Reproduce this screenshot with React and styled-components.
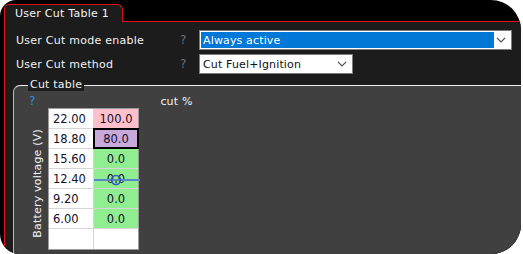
import React from "react";
import styled, { createGlobalStyle } from "styled-components";

const Global = createGlobalStyle`
  html, body { margin: 0; padding: 0; background: #ffffff; }
  body { font-family: "DejaVu Sans", Verdana, sans-serif; font-size: 11px; }
`;

const Window = styled.div`
  width: 521px;
  height: 254px;
  background: #000;
  border-radius: 16px 30px 30px 20px;
  overflow: hidden;
  display: flex;
  flex-direction: column;
  padding: 4px 0 0 4px;
  box-sizing: border-box;
`;

const TabRow = styled.div`
  display: flex;
  height: 17px;
`;

const Tab = styled.div`
  position: relative;
  z-index: 1;
  width: 119px;
  height: 18px;
  box-sizing: border-box;
  border: 1px solid #e0101a;
  border-bottom: none;
  border-radius: 5px 6px 0 0;
  background: #1c1c1c;
  color: #f4f4f4;
  padding-left: 10px;
  line-height: 17px;
  letter-spacing: 0.25px;
`;

const Body = styled.div`
  flex: 1;
  background: #1c1c1c;
  border-top: 1px solid #e0101a;
  border-left: 1px solid #e0101a;
  display: flex;
  flex-direction: column;
  min-height: 0;
`;

const Settings = styled.div`
  display: grid;
  grid-template-columns: 160px 23px auto;
  grid-auto-rows: 20px;
  row-gap: 4px;
  padding: 8px 0 0 11px;
  align-items: center;
`;

const Label = styled.div`
  color: #f2f2f2;
  letter-spacing: 0.25px;
  padding-top: 1px;
`;

const Help = styled.div`
  color: ${(p) => (p.$blue ? "#2a8de6" : "#6e6e6e")};
  padding-left: ${(p) => (p.$blue ? 0 : 4)}px;
  font-size: 12px;
`;

const Combo = styled.div`
  width: ${(p) => p.$width}px;
  height: 20px;
  box-sizing: border-box;
  border: 1px solid #7c7c7c;
  background: #fff;
  display: flex;
  align-items: center;
  padding: 1px;
`;

const ComboText = styled.div`
  flex: ${(p) => (p.$selected ? "0 0 291px" : "1")};
  align-self: stretch;
  display: flex;
  align-items: center;
  padding-left: 2px;
  background: ${(p) => (p.$selected ? "#0078d7" : "transparent")};
  color: ${(p) => (p.$selected ? "#fff" : "#111")};
  letter-spacing: 0.15px;
`;

const Chevron = styled.svg`
  margin: 0 ${(p) => p.$right}px 0 auto;
  flex: none;
`;

const Panel = styled.div`
  position: relative;
  flex: 1;
  margin: 11px 0 0 8px;
  background: #404040;
  border-top: 1px solid #f0f0f0;
  border-left: 1px solid #b8b8b8;
  border-top-left-radius: 7px;
  padding: 8px 0 0 15px;
`;

const Legend = styled.div`
  position: absolute;
  top: -7px;
  left: 14px;
  padding: 0 2px;
  background: #1c1c1c;
  color: #f2f2f2;
  line-height: 12px;
  letter-spacing: 0.2px;
`;

const PanelHead = styled.div`
  display: flex;
  height: 14px;
  line-height: 15px;
  color: #f2f2f2;
`;

const ColTitle = styled.div`
  margin-left: 125px;
  letter-spacing: 0.2px;
`;

const Chart = styled.div`
  display: flex;
  margin-left: -15px;
`;

const Axis = styled.div`
  width: 34px;
  display: flex;
  align-items: center;
  justify-content: flex-end;
  padding: 8px 4px 0 0;
  box-sizing: border-box;
`;

const AxisText = styled.div`
  writing-mode: vertical-rl;
  transform: rotate(180deg);
  color: #f2f2f2;
  letter-spacing: 0.2px;
  white-space: nowrap;
`;

const Table = styled.div`
  position: relative;
  display: grid;
  grid-template-columns: 44px 44px;
  grid-template-rows: repeat(6, 19px) 20px;
  gap: 1px;
  background: #d6d6d6;
  border: 1px solid #9c9c9c;
`;

const Cell = styled.div`
  background: ${(p) => p.$bg || "#fff"};
  color: #10102a;
  display: flex;
  align-items: center;
  justify-content: ${(p) => (p.$value ? "center" : "flex-start")};
  padding-left: ${(p) => (p.$value ? 0 : 4)}px;
  box-shadow: ${(p) => (p.$active ? "0 0 0 1px #000, inset 0 0 0 1px #000" : "none")};
  position: relative;
  z-index: ${(p) => (p.$active ? 1 : 0)};
  font-size: 11.5px;
`;

const Cursor = styled.svg`
  position: absolute;
  left: 45px;
  top: 64px;
  z-index: 2;
  pointer-events: none;
`;

const rows = [
  ["22.00", "100.0", "#ffc0cb"],
  ["18.80", "80.0", "#c9a8da", true],
  ["15.60", "0.0", "#90ee90"],
  ["12.40", "0.0", "#90ee90"],
  ["9.20", "0.0", "#90ee90"],
  ["6.00", "0.0", "#90ee90"],
];

const Down = ({ right }) => (
  <Chevron $right={right} width="10" height="6" viewBox="0 0 10 6">
    <path d="M1 1 L5 5 L9 1" fill="none" stroke="#555" strokeWidth="1.1" />
  </Chevron>
);

export default function App() {
  return (
    <>
      <Global />
      <Window>
        <TabRow>
          <Tab>User Cut Table 1</Tab>
        </TabRow>
        <Body>
          <Settings>
            <Label>User Cut mode enable</Label>
            <Help>?</Help>
            <Combo $width={313}>
              <ComboText $selected>Always active</ComboText>
              <Down right={4} />
            </Combo>
            <Label>User Cut method</Label>
            <Help>?</Help>
            <Combo $width={154}>
              <ComboText>Cut Fuel+Ignition</ComboText>
              <Down right={4} />
            </Combo>
          </Settings>
          <Panel>
            <Legend>Cut table</Legend>
            <PanelHead>
              <Help $blue>?</Help>
              <ColTitle>cut %</ColTitle>
            </PanelHead>
            <Chart>
              <Axis>
                <AxisText>Battery voltage (V)</AxisText>
              </Axis>
              <Table>
                {rows.map(([v, c, bg, active]) => (
                  <React.Fragment key={v}>
                    <Cell>{v}</Cell>
                    <Cell $value $bg={bg} $active={active}>
                      {c}
                    </Cell>
                  </React.Fragment>
                ))}
                <Cell />
                <Cell />
                <Cursor width="46" height="14" viewBox="0 0 46 14">
                  <line x1="0" y1="7" x2="46" y2="7" stroke="#5a86cc" strokeWidth="2" />
                  <circle cx="22" cy="7" r="4.5" fill="none" stroke="#3454c4" strokeWidth="1.5" />
                  <circle cx="22" cy="8" r="1" fill="#2f9a3a" />
                </Cursor>
              </Table>
            </Chart>
          </Panel>
        </Body>
      </Window>
    </>
  );
}
